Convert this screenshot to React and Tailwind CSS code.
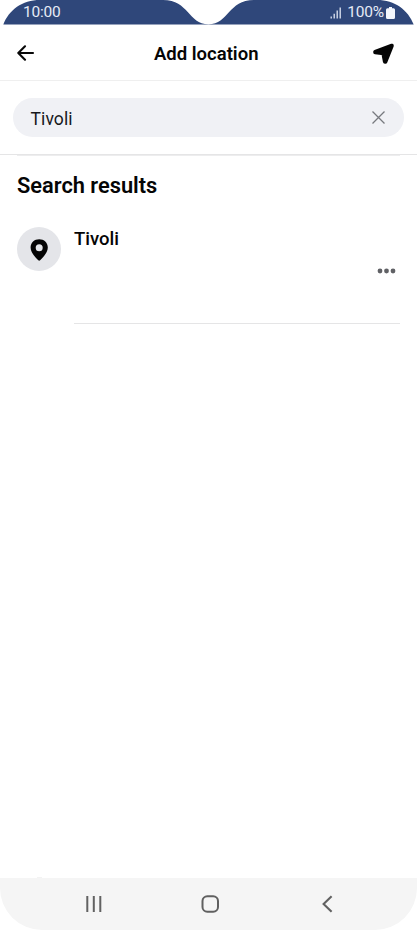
function StatusBar() {
  return (
    <div className="relative h-[25px] shrink-0">
      <svg className="absolute inset-0" width="417" height="25" viewBox="0 0 417 25" fill="none">
        <path
          d="M3.3 24.6C9 10 22 0 40 0H163C189 0 188 24.2 208.5 24.2C229 24.2 228 0 254 0H377C395 0 408 10 413.7 24.6Z"
          fill="#2f477a"
        />
      </svg>
      <div className="relative flex h-6 items-center justify-between pr-[22px] pl-[23px] text-[15.5px] leading-6 text-[#e6ebf6]">
        <span className="tracking-[-0.2px]">10:00</span>
        <div className="flex items-center">
          <svg className="mt-px mr-[6px]" width="11" height="12" viewBox="0 0 11 12" stroke="#e0e6f2" strokeWidth="1.300">
            <path d="M1.200 9.400v2M4.200 6.800v4.600M7.200 3.500v7.900M10.200 .4v11" />
          </svg>
          <span className="tracking-[-0.2px]">100%</span>
          <svg className="mt-px ml-[2px]" width="9" height="12" viewBox="0 0 9 12" fill="#f3f6fc">
            <path d="M3 0h3v1.200h1.500Q9 1.200 9 2.700v7.800Q9 12 7.500 12h-6Q0 12 0 10.500V2.700Q0 1.200 1.500 1.200H3z" />
          </svg>
        </div>
      </div>
    </div>
  );
}

function Header() {
  return (
    <header className="flex h-14 shrink-0 items-center border-b border-[#efefef] pr-[22px] pl-[17px]">
      <svg width="20" height="18" viewBox="0 0 20 18" fill="none" stroke="#080808" strokeWidth="2.100" strokeLinecap="round" strokeLinejoin="round">
        <path d="M16 9H1.500M8 2.300L1.300 9L8 15.700" />
      </svg>
      <h1 className="ml-[117px] flex-1 pt-[3px] text-[18.500px] leading-6 font-semibold text-[#050505]">Add location</h1>
      <svg className="mt-[2px]" width="23" height="22" viewBox="0 0 23 22" fill="#050505" stroke="#050505" strokeWidth="4" strokeLinejoin="round">
        <path d="M19.800 2.700L3.200 8.800L3.200 9.300L11.300 10.200L12.900 18.700L13.400 18.700Z" />
      </svg>
    </header>
  );
}

function SearchBar() {
  return (
    <div className="h-[74px] shrink-0 border-b border-[#e5e5e6] px-[13px] pt-[17px]">
      <div className="flex h-[39px] items-center justify-between rounded-full bg-[#f0f1f5] pr-[19.500px] pl-[17.500px]">
        <span className="pt-[2px] text-[17.500px] leading-6 tracking-[0.1px] text-[#17181b]">Tivoli</span>
        <svg width="13" height="13" viewBox="0 0 13 13" stroke="#77797e" strokeWidth="1.300">
          <path d="M.5 .5L12.500 12.500M12.500 .5L.5 12.500" />
        </svg>
      </div>
    </div>
  );
}

function Result() {
  return (
    <div className="mt-[27px] flex items-start">
      <div className="flex size-11 shrink-0 items-center justify-center rounded-full bg-[#e4e5e9]">
        <svg className="mt-px" width="18" height="22" viewBox="0 0 18 22">
          <path fill="#050505" fillRule="evenodd" d="M9.200 .2C4.300 .2 .6 3.600 .6 8.500C.6 14 5.500 18.200 8.300 21.300Q9.200 22 10.100 21.300C12.900 18.200 17.800 14 17.800 8.500C17.800 3.600 14.100 .2 9.200 .2ZM9.200 5.200A3.500 3.500 0 1 1 9.200 12.200A3.500 3.500 0 1 1 9.200 5.200Z" />
        </svg>
      </div>
      <div className="ml-[13px] flex h-[97px] flex-1 items-start justify-between border-b border-[#e5e5e6] pr-1">
        <span className="text-[18.500px] leading-6 font-medium text-[#050505]">Tivoli</span>
        <svg className="mt-[41px]" width="19" height="6" viewBox="0 0 19 6" fill="#606165">
          <circle cx="3" cy="3" r="2.400" />
          <circle cx="9.500" cy="3" r="2.400" />
          <circle cx="16" cy="3" r="2.400" />
        </svg>
      </div>
    </div>
  );
}

function NavBar() {
  return (
    <nav className="flex h-[52px] shrink-0 items-center rounded-b-[42px] bg-[#f5f5f5] pl-[85px]">
      <svg width="18" height="18" viewBox="0 0 18 18" stroke="#626262" strokeWidth="2">
        <path d="M2.300 1v16M8.800 1v16M15.300 1v16" />
      </svg>
      <svg className="ml-[98px]" width="18" height="18" viewBox="0 0 18 18" fill="none" stroke="#606060" strokeWidth="2">
        <rect x="1.500" y="1.200" width="15.500" height="15.600" rx="4.800" />
      </svg>
      <svg className="ml-[102px]" width="12" height="18" viewBox="0 0 12 18" fill="none" stroke="#626262" strokeWidth="2.100">
        <path d="M10.600 1.200L2.600 9L10.600 16.800" />
      </svg>
    </nav>
  );
}

export default function App() {
  return (
    <div className="flex h-[930px] w-[417px] flex-col overflow-hidden bg-white font-['Roboto',sans-serif]">
      <StatusBar />
      <Header />
      <SearchBar />
      <main className="mr-[17px] ml-[17px] flex-1 border-t border-[#ededee]">
        <h2 className="mt-[16px] text-[21.800px] leading-7 font-semibold text-[#050505]">Search results</h2>
        <Result />
      </main>
      <div className="ml-[37px] h-px w-[5px] shrink-0 bg-[#f3f3f3]" />
      <NavBar />
    </div>
  );
}
